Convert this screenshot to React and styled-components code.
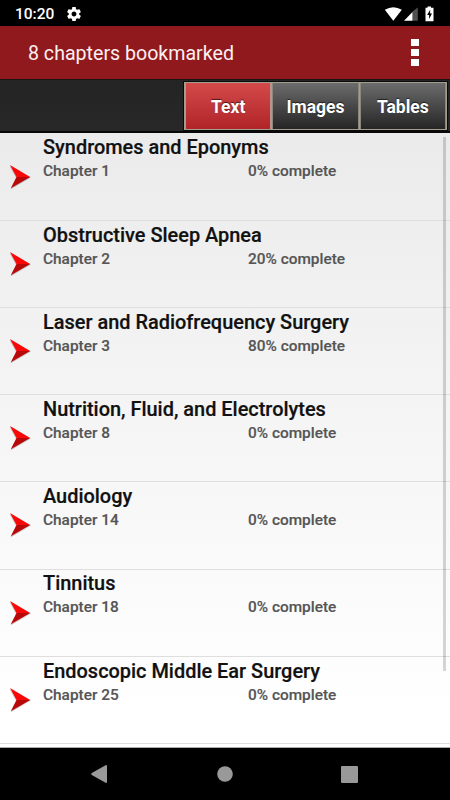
import React from "react"
import styled, { createGlobalStyle } from "styled-components";

const GlobalStyle = createGlobalStyle`
  * {
    box-sizing: border-box;
  }
  body {
    margin: 0;
    background-color: black;
    font-family: Roboto, "Liberation Sans", sans-serif;
  }
`;

const Container = styled.div`
  width: 450px;
  height: 800px;
  display: flex;
  flex-direction: column;
  overflow: hidden;
`;

const StatusBar = styled.div`
  height: 26px;
  flex-shrink: 0;
  background-color: black;
  color: white;
  display: flex;
  align-items: center;
  padding: 1px 16px 0 15px;
`;

const Time = styled.span`
  font-size: 15.5px;
  font-weight: 500;
  line-height: 24px;
  flex: 1;
  display: flex;
  align-items: center;
  gap: 13px;
`;

const StatusIcons = styled.div`
  display: flex;
  align-items: center;
`;

const Header = styled.header`
  height: 53px;
  flex-shrink: 0;
  background-color: #90191d;
  display: flex;
  align-items: center;
  justify-content: space-between;
  padding: 0 31px 0 28px;
`;

const HeaderTitle = styled.h1`
  margin: 0;
  padding-top: 2px;
  color: #fbf0f0;
  font-size: 19.6px;
  font-weight: 400;
`;

const MenuButton = styled.button`
  border: none;
  background: none;
  padding: 0;
  display: flex;
  flex-direction: column;
  gap: 3px;
`;

const MenuDot = styled.span`
  width: 8px;
  height: 7px;
  background-color: white;
`;

const Toolbar = styled.div`
  height: 54px;
  flex-shrink: 0;
  background: linear-gradient(#242424, #282828);
  border-top: 1px solid #1a1314;
  border-bottom: 2px solid #080808;
  display: flex;
  justify-content: flex-end;
  align-items: flex-start;
  padding: 2px 3px 0 0;
`;

const Tabs = styled.div`
  display: flex;
  width: 263px;
  height: 48px;
  padding: 1px;
  gap: 1px;
  background-color: #a49e90;
  outline: 1px solid #0a0a0a;
`;

const Tab = styled.button`
  flex: 1;
  border: 1px solid ${(props) => (props.$active ? "#b8938a" : "#8c877c")};
  border-top: none;
  border-bottom: none;
  padding: 1px 0 0;
  background: ${(props) =>
    props.$active
      ? "linear-gradient(#d44a4a, #b02428)"
      : "linear-gradient(#6c6c6c, #252525)"};
  color: white;
  font-family: inherit;
  font-size: 17.5px;
  font-weight: 700;
  text-shadow: 0 -1px 1px rgba(0, 0, 0, 0.6);
`;

const List = styled.main`
  position: relative;
  flex: 1;
  overflow: hidden;
  padding-top: 0.7px;
  background: linear-gradient(#ebebeb, #ffffff 95%);
  border-bottom: 1px solid #aaaaaa;
`;

const Row = styled.div`
  height: 87.2px;
  border-bottom: 1px solid #dedede;
  display: flex;
  padding-left: 9px;
`;

const ArrowBox = styled.div`
  width: 34px;
  padding-top: 30px;
`;

const Title = styled.h2`
  margin: 0;
  padding-top: 2.7px;
  font-size: 19.93px;
  line-height: 24px;
  font-weight: 500;
  color: #111111;
  -webkit-text-stroke: 0.2px #111111;
`;

const Details = styled.div`
  display: flex;
  font-size: 15.4px;
  line-height: 22.4px;
  font-weight: 500;
  color: #555555;
  -webkit-text-stroke: 0.15px #555555;
`;

const Chapter = styled.span`
  width: 205px;
`;

const ScrollThumb = styled.div`
  position: absolute;
  top: 4px;
  right: 4px;
  width: 3px;
  height: 534px;
  background-color: rgba(0, 0, 0, 0.16);
`;

const NavBar = styled.nav`
  height: 52px;
  flex-shrink: 0;
  background-color: black;
  display: flex;
  align-items: center;
  justify-content: space-between;
  padding: 0 92px 0 91px;
`;

const chapters = [
  { title: "Syndromes and Eponyms", number: 1, progress: 0 },
  { title: "Obstructive Sleep Apnea", number: 2, progress: 20 },
  { title: "Laser and Radiofrequency Surgery", number: 3, progress: 80 },
  { title: "Nutrition, Fluid, and Electrolytes", number: 8, progress: 0 },
  { title: "Audiology", number: 14, progress: 0 },
  { title: "Tinnitus", number: 18, progress: 0 },
  { title: "Endoscopic Middle Ear Surgery", number: 25, progress: 0 },
];

const GearIcon = () => (
  <svg width="14" height="14" viewBox="2 2 20 20" fill="white">
    <path d="M19.43 12.98c.04-.32.07-.64.07-.98s-.03-.66-.07-.98l2.11-1.65c.19-.15.24-.42.12-.64l-2-3.46c-.12-.22-.39-.3-.61-.22l-2.49 1c-.52-.4-1.08-.73-1.69-.98l-.38-2.65C14.46 2.18 14.25 2 14 2h-4c-.25 0-.46.18-.49.42l-.38 2.65c-.61.25-1.17.59-1.69.98l-2.49-1c-.23-.09-.49 0-.61.22l-2 3.46c-.13.22-.07.49.12.64l2.11 1.65c-.04.32-.07.65-.07.98s.03.66.07.98l-2.11 1.65c-.19.15-.24.42-.12.64l2 3.46c.12.22.39.3.61.22l2.49-1c.52.4 1.08.73 1.69.98l.38 2.65c.03.24.24.42.49.42h4c.25 0 .46-.18.49-.42l.38-2.65c.61-.25 1.17-.59 1.69-.98l2.49 1c.23.09.49 0 .61-.22l2-3.46c.12-.22.07-.49-.12-.64l-2.11-1.65zM12 15.5c-1.93 0-3.5-1.57-3.5-3.5s1.57-3.5 3.5-3.5 3.5 1.57 3.5 3.5-1.57 3.5-3.5 3.5z" />
  </svg>
)

const SignalIcons = () => (
  <svg width="50" height="16" viewBox="0 0 50 16">
    <path d="M.8 3.800Q9.300 -1.500 17.800 3.800L9.300 14.800Z" fill="white" />
    <path d="M33.800 1.500V14.800H28.500V5.500Z" fill="#505050" />
    <path d="M28.500 6V14.800H20Z" fill="white" />
    <path d="M43.500 .6h3.500v1.200h2.500v13.400h-8V1.800h2z" fill="white" />
    <path d="M46.200 3.800l-3.100 5.200h2v4l2.900-5.400h-1.900z" fill="black" />
  </svg>
)

const ArrowIcon = () => (
  <svg width="24" height="27" viewBox="0 0 24 27">
    <path d="M.5 2L22 13.500L1.500 25.500L7 14Z" fill="#000000" opacity=".2" />
    <path d="M1 1L21.200 13H7.500Z" fill="#fa0808" />
    <path d="M7.500 13H21.200L1.800 24.200Z" fill="#b80808" />
  </svg>
)

const App = () => {
  return (
    <Container>
      <GlobalStyle />
      <StatusBar>
        <Time>
          10:20
          <GearIcon />
        </Time>
        <StatusIcons>
          <SignalIcons />
        </StatusIcons>
      </StatusBar>
      <Header>
        <HeaderTitle>8 chapters bookmarked</HeaderTitle>
        <MenuButton aria-label="Menu">
          <MenuDot />
          <MenuDot />
          <MenuDot />
        </MenuButton>
      </Header>
      <Toolbar>
        <Tabs>
          <Tab $active>Text</Tab>
          <Tab>Images</Tab>
          <Tab>Tables</Tab>
        </Tabs>
      </Toolbar>
      <List>
        {chapters.map((item) => (
          <Row key={item.number}>
            <ArrowBox>
              <ArrowIcon />
            </ArrowBox>
            <div>
              <Title>{item.title}</Title>
              <Details>
                <Chapter>Chapter {item.number}</Chapter>
                <span>{item.progress}% complete</span>
              </Details>
            </div>
          </Row>
        ))}
        <ScrollThumb />
      </List>
      <NavBar>
        <svg width="16" height="18" viewBox="0 0 16 18" fill="#999999">
          <path d="M15 0Q16 0 16 1V17Q16 18 15 18L.8 10Q-.3 9 .8 8Z" />
        </svg>
        <svg width="17" height="16" viewBox="0 0 17 16" fill="#999999">
          <circle cx="9" cy="8" r="7.800" />
        </svg>
        <svg width="17" height="17" viewBox="0 0 17 17" fill="#999999">
          <rect width="17" height="17" rx="1" />
        </svg>
      </NavBar>
    </Container>
  )
}

export default App
